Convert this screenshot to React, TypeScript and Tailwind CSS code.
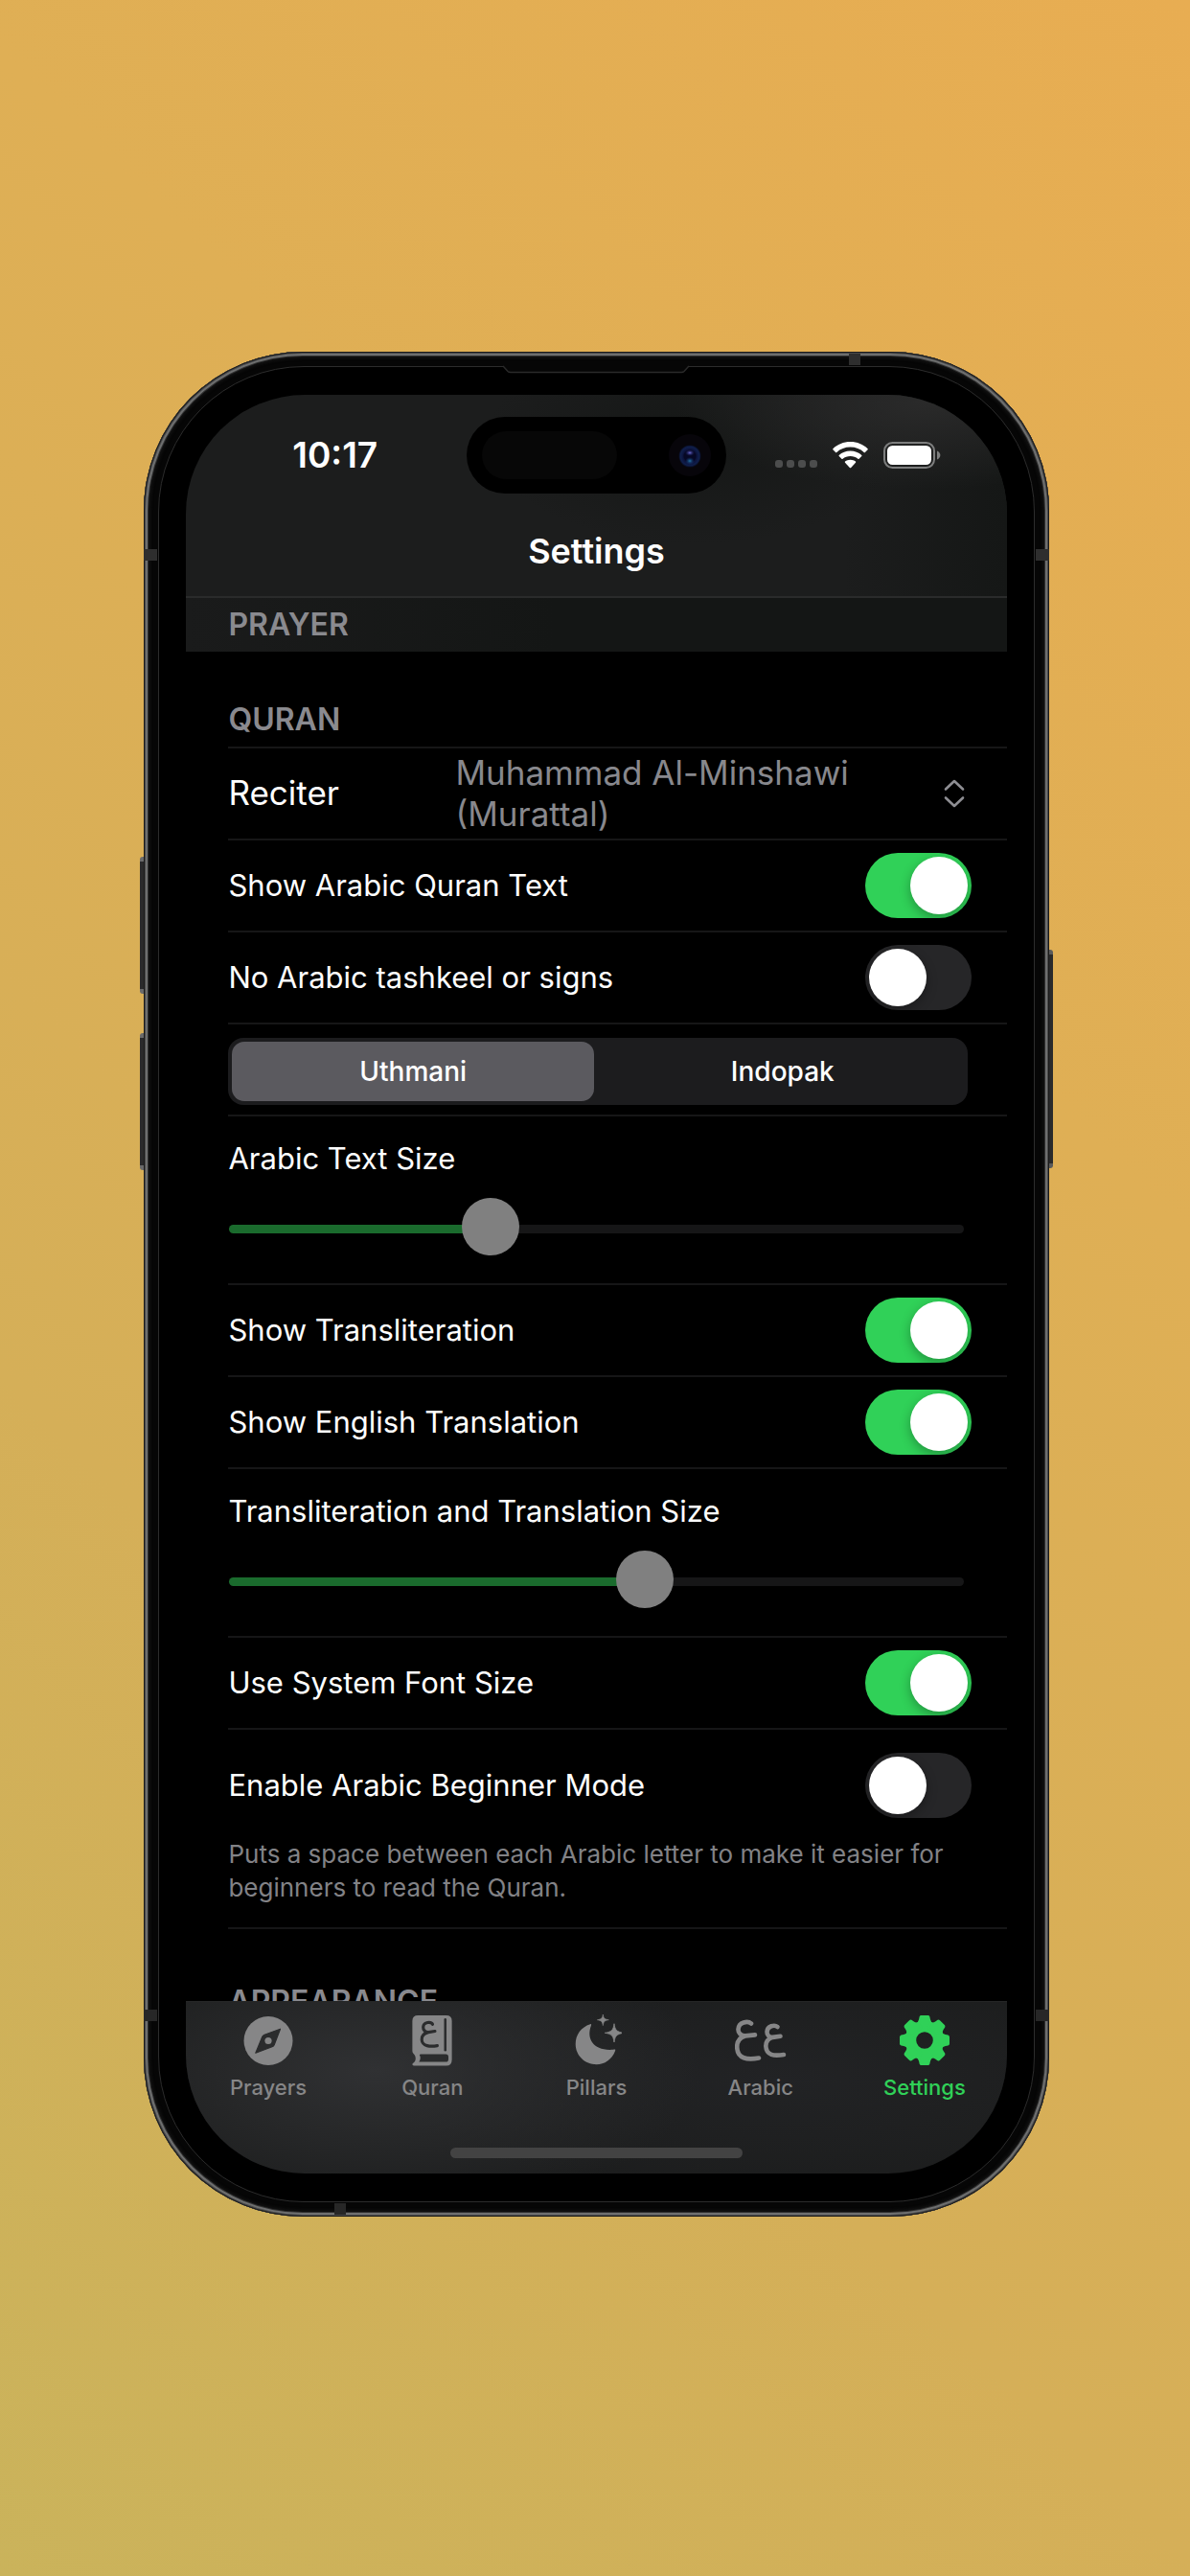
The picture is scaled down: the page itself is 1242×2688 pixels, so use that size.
import React, { useId, useState } from "react";

const gearTeeth = [0, 45, 90, 135, 180, 225, 270, 315];

function CompassIcon() {
  return (
    <svg viewBox="0 0 54 54" className="size-[54px]" aria-hidden="true">
      <circle cx="27" cy="27.5" r="25.5" fill="currentColor" />
      <path d="M39.5 15.2 L23 21.2 Q21.5 21.8 20.8 23.3 L13.8 40.2 L31 33.8 Q32.5 33.2 33.2 31.7 Z" fill="#2b2c2d" stroke="#2b2c2d" strokeWidth="1.2" strokeLinejoin="round" />
      <circle cx="27" cy="27.5" r="3.6" fill="currentColor" />
    </svg>
  );
}

function QuranIcon() {
  return (
    <svg viewBox="0 0 54 55" className="size-[54px]" aria-hidden="true" fill="none" strokeLinecap="round" strokeLinejoin="round">
      <path d="M12 1 H42 Q48 1 48 7 V48 Q48 54.5 42 54.5 H7.5 Q6 54.5 6 53 Q6 52 7.2 51.4 C10 50 10.5 44.5 7 41.5 Q6 40.5 6 39 V7 Q6 1 12 1 Z" fill="currentColor" />
      <path d="M14.5 42.3 H41.5 Q44.3 42.3 44.3 45 V47.5 Q44.3 50.5 41.5 50.5 H13 C14.8 48 15 45 13.6 43 Z" fill="#2b2c2d" />
      <path d="M41 5.5 V38" stroke="#2b2c2d" strokeWidth="2.6" />
      <path d="M27.5 10.5 C26 7.5 18 7.5 17.5 13.5 C17.3 17 20 19 23 19 L30 17.8 M23 19 C18.5 20 15.8 23 16 27 C16.5 34 25 34.5 32.5 33.2" stroke="#2b2c2d" strokeWidth="3.2" />
    </svg>
  );
}

function PillarsIcon() {
  return (
    <svg viewBox="0 0 54 54" className="size-[54px]" aria-hidden="true" fill="currentColor">
      <path d="M21 10.2 C22.3 9.7 22.3 10.6 21.9 11.8 C16.5 26 25 38.5 45 36.8 C46.8 36.4 47.8 36.3 47 38.2 C43.5 47 36 52.2 27.5 52.2 C15.5 52.2 5.7 43 5.7 31 C5.7 21 11.5 13.3 21 10.2 Z" />
      <path d="M46 9.7 C46.9 16 48.3 18.2 56 19.3 C48.3 20.4 46.9 22.6 46 29 C45.1 22.6 43.7 20.4 36.3 19.3 C43.7 18.2 45.1 16 46 9.7 Z" stroke="currentColor" strokeWidth="0.8" />
      <path d="M34.3 0 C34.9 3.8 35.7 5 40.3 5.7 C35.7 6.4 34.9 7.6 34.3 11.6 C33.7 7.6 32.9 6.4 28.4 5.7 C32.9 5 33.7 3.8 34.3 0 Z" stroke="currentColor" strokeWidth="0.6" />
    </svg>
  );
}

function ArabicIcon() {
  return (
    <svg viewBox="0 0 54 54" className="size-[54px]" aria-hidden="true" fill="none" stroke="currentColor" strokeWidth="4.6" strokeLinecap="round" strokeLinejoin="round">
      <path d="M17 9.5 C13.5 6.5 4 7.8 3.5 15.5 C3.3 19.5 6.5 22.5 11 22.4 L21 21.4 M11 22.4 C5 23.8 2.2 28.5 2.2 34 C2.5 46.5 13 47.6 25 45.5" />
      <path d="M44.5 13 C41.5 10.5 33.8 11.8 33.5 18.2 C33.3 21.5 36 24 39.5 23.9 L47.5 22.8 M39.5 23.9 C35 25.2 32.3 28.6 32.3 33 C32.8 43 41 43.6 51 42" />
    </svg>
  );
}

function GearIcon() {
  return (
    <svg viewBox="0 0 54 54" className="size-[54px]" aria-hidden="true" fill="currentColor" stroke="currentColor">
      <circle cx="27" cy="27" r="14.2" fill="none" strokeWidth="10.8" />
      {gearTeeth.map((angle) => (
        <path key={angle} transform={`rotate(${angle} 27 27)`} d="M18.5 10 Q21.3 8.8 22 5.5 L22.6 2.6 Q22.8 2 23.6 2 H30.4 Q31.2 2 31.4 2.6 L32 5.5 Q32.7 8.8 35.5 10 L34 15 H20 Z" strokeWidth="2" strokeLinejoin="round" />
      ))}
    </svg>
  );
}

function WifiIcon() {
  return (
    <svg viewBox="0 0 37 28" className="h-[28px] w-[37px]" aria-label="Wi-Fi" fill="#fff">
      <path d="M18.5 0 C25.6 0 32 2.7 36.6 7.2 Q37.1 7.8 36.6 8.3 L33.9 11 Q33.3 11.5 32.7 11 C29 7.6 24 5.6 18.5 5.6 C13 5.6 8 7.6 4.3 11 Q3.7 11.5 3.1 11 L0.4 8.3 Q-0.1 7.8 0.4 7.2 C5 2.7 11.4 0 18.5 0 Z" />
      <path d="M18.5 9.4 C23.1 9.4 27.2 11.1 30.3 13.9 Q30.8 14.4 30.3 15 L27.6 17.7 Q27 18.2 26.4 17.7 C24.3 15.9 21.5 14.9 18.5 14.9 C15.5 14.9 12.7 15.9 10.6 17.7 Q10 18.2 9.4 17.7 L6.7 15 Q6.2 14.4 6.7 13.9 C9.8 11.1 13.9 9.4 18.5 9.4 Z" />
      <path d="M18.5 18.7 C20.6 18.7 22.5 19.4 24 20.6 Q24.5 21.1 24 21.7 L19.2 26.9 Q18.5 27.5 17.8 26.9 L13 21.7 Q12.5 21.1 13 20.6 C14.5 19.4 16.4 18.7 18.5 18.7 Z" />
    </svg>
  );
}

function BatteryIcon() {
  return (
    <svg viewBox="0 0 60 28" className="h-[28px] w-[60px]" aria-label="Battery full">
      <rect x="1" y="1" width="52" height="26" rx="8.5" fill="none" stroke="#7d7e7e" strokeWidth="2" />
      <rect x="4" y="4" width="46" height="20" rx="5.5" fill="#fff" />
      <path d="M56 9.5 C58.2 10.5 59.4 12.2 59.4 14 C59.4 15.8 58.2 17.5 56 18.5 Z" fill="#7d7e7e" />
    </svg>
  );
}

function Switch({ id, on }: { id: string; on: boolean }) {
  const [checked, setChecked] = useState(on);
  return (
    <input
      id={id}
      type="checkbox"
      role="switch"
      checked={checked}
      onChange={(e) => setChecked(e.target.checked)}
      className="h-[68px] w-[111px] shrink-0 cursor-pointer appearance-none rounded-full bg-[#262628] p-1 before:block before:size-[60px] before:rounded-full before:bg-white before:shadow-[0_4px_12px_rgba(0,0,0,0.3)] checked:bg-[#30d158] checked:before:ml-auto"
    />
  );
}

function SwitchRow({ label, on }: { label: string; on: boolean }) {
  const id = useId();
  return (
    <div className="ml-11 flex h-24 items-center justify-between border-b-2 border-[#161617] pr-[37px]">
      <label htmlFor={id} className="text-[31px] leading-10 text-white">{label}</label>
      <Switch id={id} on={on} />
    </div>
  );
}

function SliderRow({ label, initial }: { label: string; initial: number }) {
  const id = useId();
  const [value, setValue] = useState(initial);
  const fill = 29 + (value / 1000) * 707;
  return (
    <div className="ml-11 flex h-44 flex-col border-b-2 border-[#161617] pt-6 pr-11">
      <label htmlFor={id} className="text-[31px] leading-10 text-white">{label}</label>
      <input
        id={id}
        type="range"
        min={0}
        max={1000}
        value={value}
        onChange={(e) => setValue(Number(e.target.value))}
        style={{ "--fill": `${(fill / 766) * 100}%` } as React.CSSProperties}
        className="mx-px mt-6 h-[60px] cursor-pointer appearance-none bg-transparent [&::-webkit-slider-runnable-track]:h-[9px] [&::-webkit-slider-runnable-track]:rounded-full [&::-webkit-slider-runnable-track]:bg-[linear-gradient(to_right,#1a6b2d_var(--fill),#161617_var(--fill))] [&::-webkit-slider-thumb]:-mt-7 [&::-webkit-slider-thumb]:size-[60px] [&::-webkit-slider-thumb]:appearance-none [&::-webkit-slider-thumb]:rounded-full [&::-webkit-slider-thumb]:bg-[#808080]"
      />
    </div>
  );
}

function ScriptPicker() {
  const [script, setScript] = useState("Uthmani");
  return (
    <div className="ml-11 flex h-24 items-center border-b-2 border-[#161617] pt-1 pr-[41px]">
      <fieldset className="flex h-[70px] flex-1 gap-2 rounded-2xl bg-[#1c1c1e] p-1">
        <legend className="sr-only">Arabic script</legend>
        {["Uthmani", "Indopak"].map((name) => (
          <label
            key={name}
            className="flex flex-1 cursor-pointer items-center justify-center rounded-[13px] text-[28px] font-medium text-white has-checked:bg-[#5b5a5f]"
          >
            <input
              type="radio"
              name="script"
              className="sr-only"
              checked={script === name}
              onChange={() => setScript(name)}
            />
            {name}
          </label>
        ))}
      </fieldset>
    </div>
  );
}

function ReciterRow() {
  return (
    <div className="ml-11 flex h-24 items-center border-b-2 border-[#161617] pr-11">
      <span id="reciter-label" className="w-[237px] shrink-0 text-[35px] text-white">Reciter</span>
      <button type="button" aria-haspopup="listbox" aria-labelledby="reciter-label reciter-value" className="flex flex-1 cursor-pointer items-center justify-between text-left">
        <span id="reciter-value" className="w-[440px] text-[35px] leading-[43px] text-[#88888d]">Muhammad Al-Minshawi (Murattal)</span>
        <svg viewBox="0 0 22 30" className="h-[30px] w-[22px]" fill="none" stroke="#8e8e93" strokeWidth="2.6" strokeLinecap="round" strokeLinejoin="round" aria-hidden="true">
          <path d="M2 10.5 L11 2 L20 10.5 M2 19.5 L11 28 L20 19.5" />
        </svg>
      </button>
    </div>
  );
}

function BeginnerRow() {
  return (
    <div className="ml-11 border-b-2 border-[#161617] pt-6 pb-6">
      <div className="flex items-center justify-between pr-[37px]">
        <label htmlFor="beginner" className="text-[31px] leading-10 text-white">Enable Arabic Beginner Mode</label>
        <Switch id="beginner" on={false} />
      </div>
      <p className="mt-5 pr-11 text-[26px] leading-[35px] text-[#828286]">
        Puts a space between each Arabic letter to make it easier for beginners to read the Quran.
      </p>
    </div>
  );
}

function StatusBar() {
  return (
    <div className="grid grid-cols-[1fr_271px_1fr] items-center pt-[23px]">
      <time className="pl-[18px] text-center text-[37px] font-semibold text-white">10:17</time>
      <div className="flex h-20 items-center justify-between rounded-full bg-black pr-4 pl-4">
        <div className="h-[50px] w-[141px] rounded-full bg-[#070707]" />
        <svg viewBox="0 0 44 44" className="size-11" aria-hidden="true">
          <defs>
            <radialGradient id="lens">
              <stop offset="0" stopColor="#20276a" />
              <stop offset="0.55" stopColor="#0b0f35" />
              <stop offset="0.85" stopColor="#101f4c" />
              <stop offset="1" stopColor="#080c20" />
            </radialGradient>
            <radialGradient id="glint">
              <stop offset="0" stopColor="#6b6ad0" />
              <stop offset="1" stopColor="#1c1d63" stopOpacity="0" />
            </radialGradient>
            <radialGradient id="glint-low">
              <stop offset="0" stopColor="#2478a8" />
              <stop offset="1" stopColor="#102a6a" stopOpacity="0" />
            </radialGradient>
          </defs>
          <circle cx="22" cy="22" r="22" fill="#07050a" />
          <circle cx="22" cy="23" r="11.5" fill="url(#lens)" />
          <circle cx="22" cy="23" r="6.5" fill="#060824" />
          <ellipse cx="22" cy="19.5" rx="5" ry="3.4" fill="url(#glint)" />
          <ellipse cx="22" cy="28" rx="5" ry="4" fill="url(#glint-low)" />
        </svg>
      </div>
      <div className="flex items-center justify-center pr-[18px]">
        <div className="mt-[19px] mr-4 flex gap-1">
          <i className="size-2 rounded-[3px] bg-[#4c4d4d]" />
          <i className="size-2 rounded-[3px] bg-[#4c4d4d]" />
          <i className="size-2 rounded-[3px] bg-[#4c4d4d]" />
          <i className="size-2 rounded-[3px] bg-[#4c4d4d]" />
        </div>
        <WifiIcon />
        <span className="w-4" />
        <BatteryIcon />
      </div>
    </div>
  );
}

const tabs = [
  { name: "Prayers", icon: <CompassIcon /> },
  { name: "Quran", icon: <QuranIcon /> },
  { name: "Pillars", icon: <PillarsIcon /> },
  { name: "Arabic", icon: <ArabicIcon /> },
  { name: "Settings", icon: <GearIcon />, active: true },
];

function TabBar() {
  return (
    <nav className="border-t border-[#252626] bg-[#1c1d1d] bg-[radial-gradient(ellipse_340px_150px_at_23%_40%,#303133,transparent),radial-gradient(ellipse_420px_120px_at_72%_45%,#222325,transparent)] pt-[13px] pb-4">
      <div className="grid grid-cols-5">
        {tabs.map((tab) => (
          <a
            key={tab.name}
            href={`#${tab.name.toLowerCase()}`}
            aria-current={tab.active ? "page" : undefined}
            className={`flex flex-col items-center ${tab.active ? "text-[#30d158]" : "text-[#868687]"}`}
          >
            {tab.icon}
            <span className="mt-2 text-[22px] leading-7 font-medium">{tab.name}</span>
          </a>
        ))}
      </div>
      <div className="mx-auto mt-[49px] h-[11px] w-[305px] rounded-full bg-[#434343]" />
    </nav>
  );
}

function Hardware() {
  return (
    <div aria-hidden="true">
      <span className="absolute top-[527px] -left-1 h-[143px] w-1 rounded-l-[3px] border-y-[5px] border-[#6a6a6a] bg-[#2a2a2b]" />
      <span className="absolute top-[711px] -left-1 h-[143px] w-1 rounded-l-[3px] border-y-[5px] border-[#6a6a6a] bg-[#2a2a2b]" />
      <span className="absolute top-[624px] -right-1 h-[228px] w-1 rounded-r-[3px] border-y-[5px] border-[#5a5a5a] bg-[#2a2a2b]" />
      <span className="absolute top-[206px] left-0 h-3 w-[14px] bg-[#2e2e2e]" />
      <span className="absolute top-[206px] right-0 h-3 w-[14px] bg-[#2e2e2e]" />
      <span className="absolute bottom-[204px] left-0 h-3 w-[14px] bg-[#272727]" />
      <span className="absolute right-0 bottom-[204px] h-3 w-[14px] bg-[#272727]" />
      <span className="absolute top-[2px] right-[197px] h-3 w-3 bg-[#2e2e2e]" />
      <span className="absolute bottom-[2px] left-[199px] h-3 w-3 bg-[#272727]" />
      <svg viewBox="0 0 194 9" className="absolute top-[14px] left-1/2 h-[9px] w-[194px] -translate-x-1/2" fill="#060606" stroke="#2a2a2a" strokeWidth="1.5">
        <path d="M0 1 L5 6.5 Q6 7.5 8 7.5 H186 Q188 7.5 189 6.5 L194 1" />
      </svg>
    </div>
  );
}

const sectionTitle = "pl-11 text-[32px] leading-[56px] font-semibold text-[#8a8a8f]";

export default function App() {
  return (
    <div className="flex min-h-screen items-center justify-center bg-[linear-gradient(45deg,#cab35b_0%,#d5af58_32%,#dfaf55_67%,#e8ad52_100%)] pb-[9px] pl-[3px] font-['Inter','Liberation_Sans',sans-serif]">
      <div className="relative w-[76.2%] rounded-[166px] bg-[#060606] p-[15px] shadow-[inset_0_0_0_1px_#1b1b1b,inset_0_0_0_2px_#4a4a4a,inset_0_0_0_4px_#6e6f6f,inset_0_0_0_5px_#303030,inset_0_0_3px_7px_#111]">
        <Hardware />
        <div className="rounded-[152px] border border-[#2c2c2c] bg-black px-7 py-[29px]">
          <div className="overflow-hidden rounded-[124px] bg-black">
            <header className="border-b-2 border-[#2a2b2b] bg-[#1c1d1d] bg-[radial-gradient(ellipse_260px_90px_at_90%_4%,#2a2a2a,transparent),radial-gradient(ellipse_220px_110px_at_62%_22%,#151716,transparent),linear-gradient(to_right,transparent_80%,#151716)]">
              <StatusBar />
              <h1 className="pt-[14px] text-center text-[36px] leading-[93px] font-semibold text-white">Settings</h1>
            </header>
            <h2 className={`bg-[linear-gradient(to_right,#1a1b1b,#141615_45%)] ${sectionTitle}`}>PRAYER</h2>
            <main>
              <h2 className={`pt-[43px] ${sectionTitle}`}>QURAN</h2>
              <div className="ml-11 h-0.5 bg-[#161617]" />
              <ReciterRow />
              <SwitchRow label="Show Arabic Quran Text" on />
              <SwitchRow label="No Arabic tashkeel or signs" on={false} />
              <ScriptPicker />
              <SliderRow label="Arabic Text Size" initial={343} />
              <SwitchRow label="Show Transliteration" on />
              <SwitchRow label="Show English Translation" on />
              <SliderRow label="Transliteration and Translation Size" initial={571} />
              <SwitchRow label="Use System Font Size" on />
              <BeginnerRow />
              <div className="h-[75px] overflow-hidden pt-12">
                <h2 className={sectionTitle}>APPEARANCE</h2>
              </div>
            </main>
            <TabBar />
          </div>
        </div>
      </div>
    </div>
  );
}
